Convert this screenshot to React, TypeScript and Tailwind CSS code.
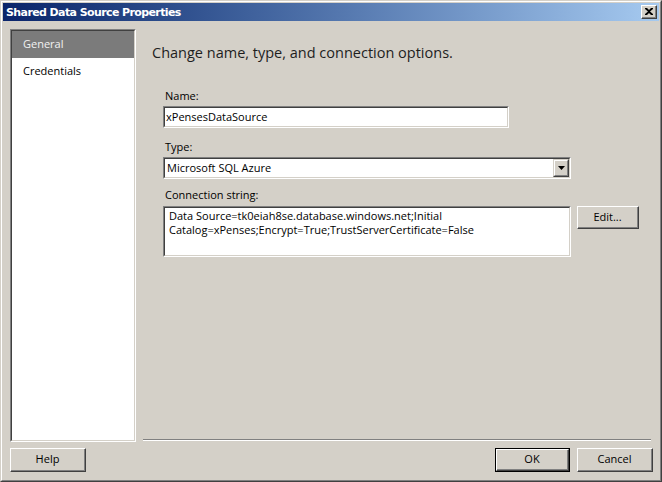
import React from "react";

const ui = { fontFamily: '"Open Sans", "Noto Sans", sans-serif' };

function Raised({ children, className = "", isDefault = false }: { children: React.ReactNode; className?: string; isDefault?: boolean }) {
  const inner = (
    <div className="border-t border-l border-t-white border-l-white border-b border-r border-b-[#404040] border-r-[#404040] w-full h-full">
      <div className="border-b border-r border-b-[#808080] border-r-[#808080] w-full h-full flex items-center justify-center text-[11px] text-black" style={ui}>
        {children}
      </div>
    </div>
  );
  return (
    <div className={`bg-[#d4d0c8] ${isDefault ? "border border-black" : ""} ${className}`}>{inner}</div>
  );
}

function Sunken({ children, className = "" }: { children: React.ReactNode; className?: string }) {
  return (
    <div className={`border-t border-l border-t-[#808080] border-l-[#808080] border-b border-r border-b-white border-r-white ${className}`}>
      <div className="border-t border-l border-t-[#404040] border-l-[#404040] border-b border-r border-b-[#d4d0c8] border-r-[#d4d0c8] w-full h-full bg-white">
        {children}
      </div>
    </div>
  );
}

export default function App() {
  return (
    <div className="w-[662px] h-[482px] bg-[#d4d0c8] border-t border-l border-t-[#d4d0c8] border-l-[#d4d0c8] border-b border-r border-b-[#404040] border-r-[#404040]">
      <div className="w-full h-full border-t border-l border-t-white border-l-white border-b border-r border-b-[#808080] border-r-[#808080] p-px flex flex-col">
        {/* Title bar */}
        <div className="h-[18px] flex items-center bg-gradient-to-r from-[#0a246a] to-[#a6caf0] pl-[3px] pr-[2px]">
          <span className="text-white font-bold text-[11px] leading-none" style={{ fontFamily: '"DejaVu Sans", sans-serif', letterSpacing: "-0.6px" }}>
            Shared Data Source Properties
          </span>
          <div className="ml-auto w-[16px] h-[14px] bg-[#d4d0c8] border-t border-l border-t-white border-l-white border-b border-r border-b-[#404040] border-r-[#404040]">
            <div className="w-full h-full border-b border-r border-b-[#808080] border-r-[#808080] flex items-center justify-center">
              <svg width="8" height="7" viewBox="0 0 8 7">
                <path d="M0 0h2l2 2 2-2h2v1L5 3.5 8 6v1H6L4 5 2 7H0V6l3-2.5L0 1z" fill="#000" />
              </svg>
            </div>
          </div>
        </div>

        {/* Body */}
        <div className="flex pt-[8px] pl-[7px]">
          <Sunken className="w-[126px] h-[413px]">
            <div className="flex flex-col" style={ui}>
              <div className="h-[27px] bg-[#7b7b7b] text-[#f2f2f2] text-[11px] pl-[11px] flex items-center">General</div>
              <div className="h-[27px] text-black text-[11px] pl-[11px] flex items-center">Credentials</div>
            </div>
          </Sunken>
          <div className="ml-[7px] flex-1 h-[413px] flex flex-col pr-[8px]">
            <div className="mt-[14px] ml-[9px] text-[14.5px] text-[#1e1e1e] leading-[20px]" style={ui}>
              Change name, type, and connection options.
            </div>
            <div className="ml-[20px] mt-[25px] flex flex-col" style={ui}>
              <div className="text-[11px] leading-[16px] text-black pl-[2px]">Name:</div>
              <Sunken className="mt-[2px] w-[346px] h-[22px]">
                <div className="text-[11px] leading-[18px] pl-[1px] text-black">xPensesDataSource</div>
              </Sunken>
              <div className="mt-[11px] text-[11px] leading-[16px] text-black pl-[2px]">Type:</div>
              <Sunken className="mt-[2px] w-[408px] h-[22px]">
                <div className="flex h-full">
                  <div className="flex-1 text-[11px] leading-[18px] pl-[2px] text-black">Microsoft SQL Azure</div>
                  <div className="w-[16px] h-[18px] bg-[#d4d0c8] border-t border-l border-t-[#d4d0c8] border-l-[#d4d0c8] border-b border-r border-b-[#404040] border-r-[#404040]">
                    <div className="w-full h-full border-t border-l border-t-white border-l-white border-b border-r border-b-[#808080] border-r-[#808080] flex items-center justify-center">
                      <svg width="7" height="4" viewBox="0 0 7 4">
                        <path d="M0 0h7L3.5 4z" fill="#000" />
                      </svg>
                    </div>
                  </div>
                </div>
              </Sunken>
              <div className="mt-[8px] text-[11px] leading-[16px] text-black pl-[2px]">Connection string:</div>
              <div className="mt-[3px] flex items-start">
                <Sunken className="w-[408px] h-[51px]">
                  <div className="text-[11px] leading-[14px] pl-[4px] pt-[1px] text-black">
                    <div>Data Source=tk0eiah8se.database.windows.net;Initial</div>
                    <div>Catalog=xPenses;Encrypt=True;TrustServerCertificate=False</div>
                  </div>
                </Sunken>
                <Raised className="ml-[6px] w-[62px] h-[23px]">Edit...</Raised>
              </div>
            </div>
            <div className="mt-auto mb-[1px] h-[2px] border-t border-t-[#808080] border-b border-b-white" />
          </div>
        </div>

        {/* Footer */}
        <div className="flex pl-[7px] pr-[6px] mt-[6px]">
          <Raised className="w-[76px] h-[24px]">Help</Raised>
          <Raised isDefault className="ml-auto w-[75px] h-[24px]">OK</Raised>
          <Raised className="ml-[7px] w-[76px] h-[24px]">Cancel</Raised>
        </div>
      </div>
    </div>
  );
}
